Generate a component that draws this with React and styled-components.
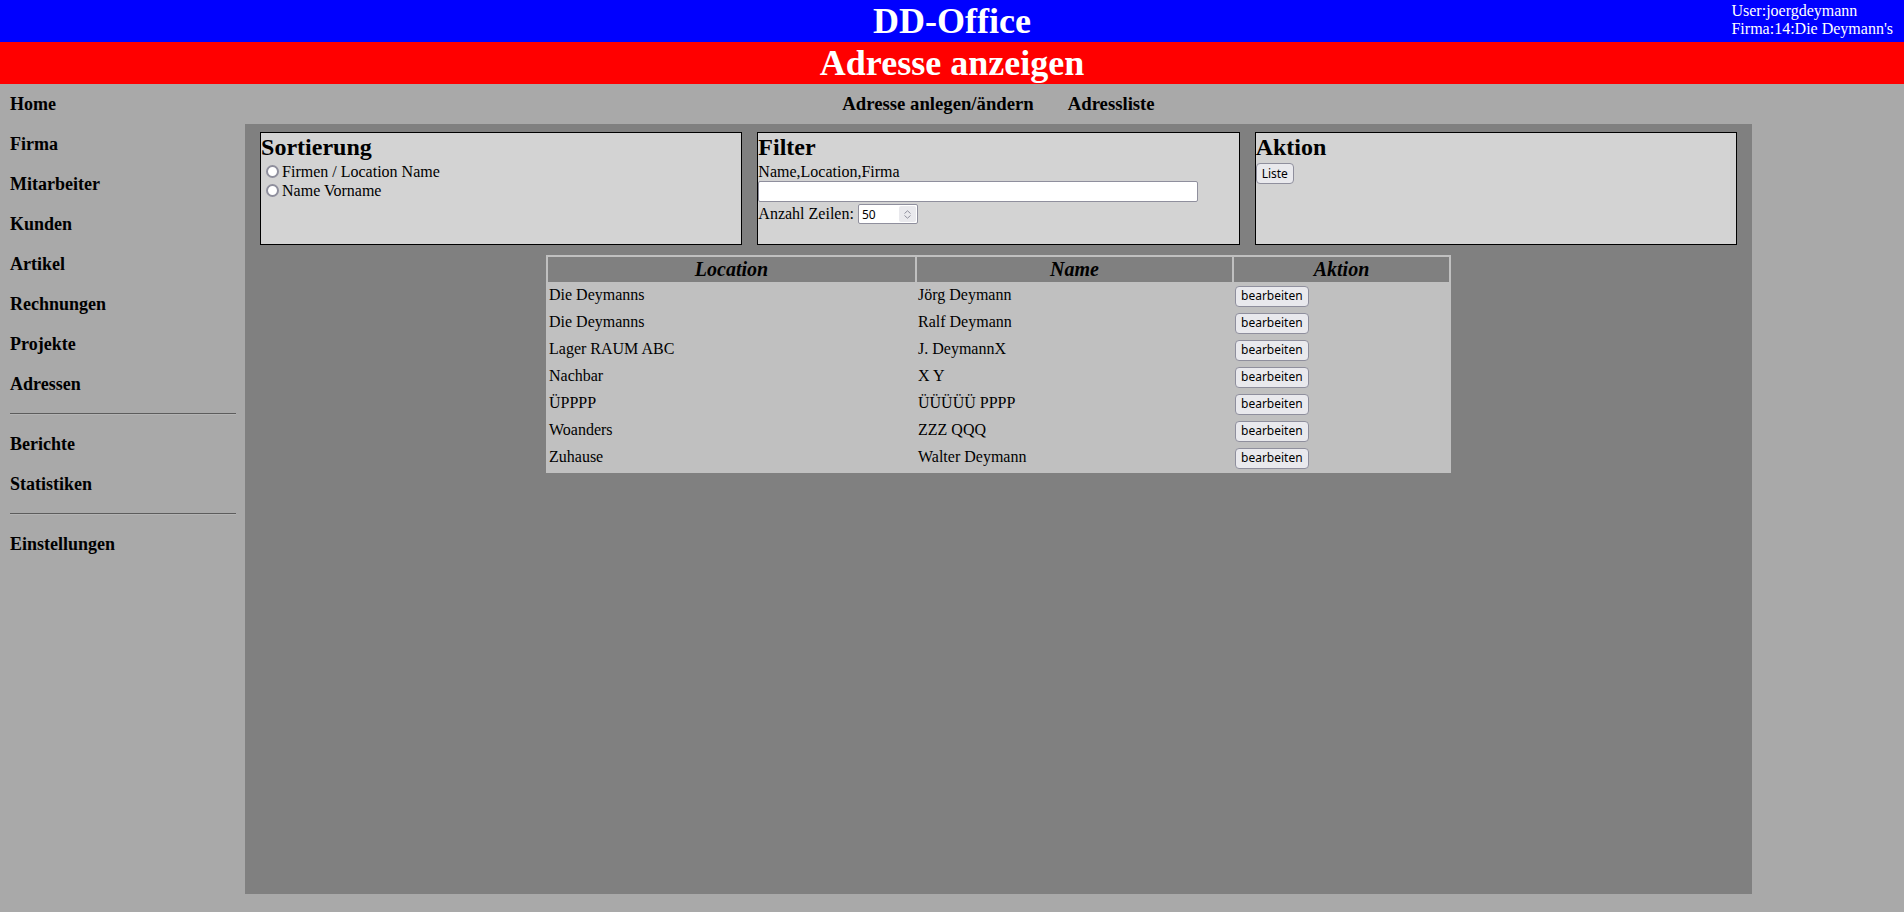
import React from "react";
import styled, { createGlobalStyle } from "styled-components";

const Global = createGlobalStyle`
  html, body {
    margin: 0;
    padding: 0;
    background: #a9a9a9;
    font-family: "Liberation Serif", "Times New Roman", serif;
    font-size: 16px;
    color: #000;
  }
`;

const Page = styled.div`
  min-height: 912px;
`;

const TopBar = styled.header`
  display: grid;
  grid-template-columns: 1fr auto 1fr;
  background: #0000ff;
  color: #fff;
`;

const AppTitle = styled.h1`
  grid-column: 2;
  margin: 0;
  font-size: 36px;
  font-weight: bold;
  line-height: normal;
  text-align: center;
`;

const UserInfo = styled.div`
  grid-column: 3;
  justify-self: end;
  padding: 2px 11px 0 0;
  font-size: 16px;
  line-height: 18px;
`;

const PageTitleBar = styled.div`
  background: #ff0000;
  color: #fff;
  font-size: 36px;
  font-weight: bold;
  line-height: normal;
  text-align: center;
`;

const Body = styled.div`
  display: flex;
  align-items: flex-start;
`;

const Sidebar = styled.nav`
  width: 245px;
  box-sizing: border-box;
  padding: 0 9px 0 10px;
  display: flex;
  flex-direction: column;
`;

const SideLink = styled.a`
  display: block;
  height: 40px;
  line-height: 40px;
  font-size: 18px;
  font-weight: bold;
  color: #000;
  text-decoration: none;
  cursor: pointer;
`;

const Divider = styled.hr`
  margin: 9px 0;
  height: 0;
  border: none;
  border-top: 1px solid #5c5c5c;
  border-bottom: 1px solid #b4b4b4;
`;

const Main = styled.main`
  width: 1507px;
  display: flex;
  flex-direction: column;
`;

const TopNav = styled.div`
  height: 40px;
  display: flex;
  justify-content: center;
  align-items: center;
  gap: 34px;
`;

const TopLink = styled.a`
  font-size: 18.72px;
  font-weight: bold;
  color: #000;
  text-decoration: none;
  cursor: pointer;
`;

const Panel = styled.section`
  height: 770px;
  background: #808080;
  padding-top: 8px;
  box-sizing: border-box;
`;

const BoxRow = styled.div`
  display: flex;
  justify-content: space-evenly;
`;

const Box = styled.div`
  width: 32%;
  height: 113px;
  box-sizing: border-box;
  border: 1px solid #000;
  background: #d3d3d3;
`;

const BoxTitle = styled.h2`
  margin: 0;
  font-size: 24px;
  font-weight: bold;
  line-height: 29px;
`;

const RadioLabel = styled.label`
  display: flex;
  align-items: center;
  height: 19px;
`;

const Radio = styled.input.attrs({ type: "radio" })`
  appearance: none;
  width: 13px;
  height: 13px;
  box-sizing: border-box;
  margin: 0 3px 0 5px;
  border: 2px solid #8f8f9d;
  border-radius: 50%;
  background: #fff;
`;

const FieldLabel = styled.div`
  line-height: 19px;
  display: flex;
  align-items: center;
`;

const ControlFont = `
  font-family: "Noto Sans", "Open Sans", sans-serif;
  font-size: 12px;
  color: #000;
`;

const TextInput = styled.input.attrs({ type: "text" })`
  ${ControlFont}
  display: block;
  width: 440px;
  height: 21px;
  box-sizing: border-box;
  margin: 0;
  padding: 1px 3px;
  border: 1px solid #8f8f9d;
  border-radius: 2px;
  background: #fff;
`;

const NumberField = styled.span`
  display: inline-flex;
  align-items: stretch;
  width: 60px;
  height: 20px;
  box-sizing: border-box;
  margin: 2px 0 0 4px;
  border: 1px solid #8f8f9d;
  border-radius: 2px;
  background: #fff;
  overflow: hidden;
`;

const NumberInput = styled.input.attrs({ type: "text" })`
  ${ControlFont}
  flex: 1;
  min-width: 0;
  border: none;
  outline: none;
  padding: 0 3px;
  background: transparent;
`;

const Spinner = styled.span`
  width: 17px;
  margin: 1px;
  background: #e9e9ed;
  border-radius: 2px;
  display: flex;
  flex-direction: column;
  align-items: center;
  justify-content: center;
  gap: 1px;
`;

const Btn = styled.button`
  ${ControlFont}
  margin: 0;
  padding: 1px 5px;
  height: 21px;
  line-height: 16px;
  border: 1px solid #8f8f9d;
  border-radius: 4px;
  background: #e9e9ed;
  cursor: pointer;
`;

const ActionLine = styled.div`
  padding-top: 1px;
`;

const Table = styled.table`
  margin: 10px auto 0;
  width: 60%;
  background: #c0c0c0;
  border-spacing: 2px;
  table-layout: fixed;
`;

const Th = styled.th`
  background: #808080;
  padding: 1px;
  font-size: 20px;
  font-weight: bold;
  font-style: italic;
  text-align: center;
  width: ${(p) => p.$w}px;
`;

const Td = styled.td`
  padding: 1px;
  height: 23px;
  vertical-align: top;
  text-align: left;
  white-space: nowrap;
  line-height: 20px;
`;

const Chevron = ({ up }) => (
  <svg width="7" height="4" viewBox="0 0 7 4" fill="none">
    <path
      d={up ? "M0.5 3.5 L3.5 0.8 L6.5 3.5" : "M0.5 0.5 L3.5 3.2 L6.5 0.5"}
      stroke="#8f8f9d"
      strokeWidth="1"
    />
  </svg>
);

const rows = [
  ["Die Deymanns", "Jörg Deymann"],
  ["Die Deymanns", "Ralf Deymann"],
  ["Lager RAUM ABC", "J. DeymannX"],
  ["Nachbar", "X Y"],
  ["ÜPPPP", "ÜÜÜÜÜ PPPP"],
  ["Woanders", "ZZZ QQQ"],
  ["Zuhause", "Walter Deymann"],
];

const menu1 = ["Home", "Firma", "Mitarbeiter", "Kunden", "Artikel", "Rechnungen", "Projekte", "Adressen"];
const menu2 = ["Berichte", "Statistiken"];

export default function App() {
  return (
    <Page>
      <Global />
      <TopBar>
        <AppTitle>DD-Office</AppTitle>
        <UserInfo>
          User:joergdeymann
          <br />
          Firma:14:Die Deymann's
        </UserInfo>
      </TopBar>
      <PageTitleBar>Adresse anzeigen</PageTitleBar>
      <Body>
        <Sidebar>
          {menu1.map((m) => (
            <SideLink key={m}>{m}</SideLink>
          ))}
          <Divider />
          {menu2.map((m) => (
            <SideLink key={m}>{m}</SideLink>
          ))}
          <Divider />
          <SideLink>Einstellungen</SideLink>
        </Sidebar>
        <Main>
          <TopNav>
            <TopLink>Adresse anlegen/ändern</TopLink>
            <TopLink>Adressliste</TopLink>
          </TopNav>
          <Panel>
            <BoxRow>
              <Box>
                <BoxTitle>Sortierung</BoxTitle>
                <RadioLabel>
                  <Radio name="sort" />
                  Firmen / Location Name
                </RadioLabel>
                <RadioLabel>
                  <Radio name="sort" />
                  Name Vorname
                </RadioLabel>
              </Box>
              <Box>
                <BoxTitle>Filter</BoxTitle>
                <FieldLabel>Name,Location,Firma</FieldLabel>
                <TextInput />
                <FieldLabel>
                  Anzahl Zeilen:
                  <NumberField>
                    <NumberInput defaultValue="50" />
                    <Spinner>
                      <Chevron up />
                      <Chevron />
                    </Spinner>
                  </NumberField>
                </FieldLabel>
              </Box>
              <Box>
                <BoxTitle>Aktion</BoxTitle>
                <ActionLine>
                  <Btn>Liste</Btn>
                </ActionLine>
              </Box>
            </BoxRow>
            <Table>
              <thead>
                <tr>
                  <Th $w={365}>Location</Th>
                  <Th $w={313}>Name</Th>
                  <Th $w={213}>Aktion</Th>
                </tr>
              </thead>
              <tbody>
                {rows.map(([loc, name], i) => (
                  <tr key={i}>
                    <Td>{loc}</Td>
                    <Td>{name}</Td>
                    <Td>
                      <Btn>bearbeiten</Btn>
                    </Td>
                  </tr>
                ))}
              </tbody>
            </Table>
          </Panel>
        </Main>
      </Body>
    </Page>
  );
}
